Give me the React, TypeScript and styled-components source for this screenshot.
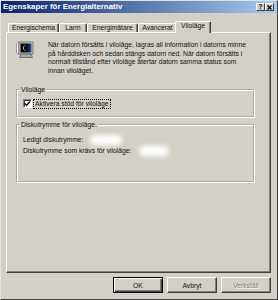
import React from 'react';
import styled, { createGlobalStyle, css } from 'styled-components';

const FACE = '#d4d0c8';

const GlobalStyle = createGlobalStyle`
  html, body { margin: 0; padding: 0; background: ${FACE}; }
  #root { width: 278px; height: 300px; }
  * { box-sizing: border-box; }
`;

const Window = styled.div`
  width: 278px;
  height: 300px;
  display: flex;
  flex-direction: column;
  background: ${FACE};
  border: 1px solid;
  border-color: #e4e2dc #404040 #404040 #e4e2dc;
  font-family: "Liberation Sans", Arial, sans-serif;
  font-size: 6.75px;
  color: #111;
`;

const TitleBar = styled.div`
  height: 12px;
  flex: none;
  display: flex;
  align-items: center;
  padding: 0 3px 0 2px;
  background: linear-gradient(to right, #0a246a, #a6caf0);
`;

const Title = styled.span`
  flex: 1;
  color: #fff;
  font-weight: bold;
  font-size: 7.9px;
  line-height: 12px;
  white-space: nowrap;
`;

const CaptionButtons = styled.div`
  display: flex;
`;

const CaptionButton = styled.div`
  width: 9px;
  height: 8px;
  background: ${FACE};
  border: 1px solid;
  border-color: #fff #404040 #404040 #fff;
  display: flex;
  align-items: center;
  justify-content: center;
  font-weight: bold;
  font-size: 6.5px;
  line-height: 1;
  color: #000;
`;

const Body = styled.div`
  flex: 1;
  display: flex;
  flex-direction: column;
  padding: 8px 6px 6px 5px;
  min-height: 0;
`;

const TabStrip = styled.div`
  height: 11px;
  flex: none;
  display: flex;
  align-items: flex-end;
  padding-left: 2px;
`;

const Tab = styled.div<{ $w: number; $active?: boolean }>`
  position: relative;
  z-index: ${p => (p.$active ? 2 : 1)};
  width: ${p => p.$w + (p.$active ? 4 : 0)}px;
  height: ${p => (p.$active ? 12 : 9)}px;
  margin: ${p => (p.$active ? '0 -2px -1px -2px' : '0')};
  background: ${FACE};
  border-top: 1px solid #fff;
  border-left: 1px solid #fff;
  border-right: 1px solid #404040;
  border-radius: 2px 2px 0 0;
  box-shadow: inset -1px 0 #808080;
  text-align: center;
  white-space: nowrap;
  line-height: 8px;
`;

const Panel = styled.div`
  flex: 1;
  display: flex;
  flex-direction: column;
  border: 1px solid;
  border-color: #fff #404040 #404040 #fff;
  box-shadow: inset -1px -1px #808080;
  padding: 8px 15px 0 9px;
`;

const Intro = styled.div`
  display: flex;
`;

const IconCell = styled.div`
  width: 32px;
  flex: none;
`;

const IntroText = styled.p`
  margin: 0;
  line-height: 8.5px;
  white-space: nowrap;
`;

const GroupBox = styled.fieldset<{ $gap: number; $pt: number; $pb: number }>`
  margin: ${p => p.$gap}px 0 0 0;
  padding: ${p => p.$pt}px 6px ${p => p.$pb}px 5px;
  border: 2px groove #fff;
  min-width: 0;
`;

const Legend = styled.legend`
  padding: 0 1px;
  margin-left: -3px;
  line-height: 8px;
`;

const CheckRow = styled.div`
  display: flex;
  align-items: center;
  height: 9px;
`;

const CheckBox = styled.span`
  width: 9px;
  height: 9px;
  flex: none;
  background: #fff;
  border: 1px solid;
  border-color: #808080 #fff #fff #808080;
  box-shadow: inset 1px 1px #404040;
  display: flex;
  align-items: center;
  justify-content: center;
`;

const CheckLabel = styled.span`
  margin-left: 2px;
  padding: 0 1px;
  outline: 1px dotted #000;
  outline-offset: 0;
  line-height: 8px;
`;

const InfoRow = styled.div`
  display: flex;
  align-items: center;
  height: 11px;
  white-space: nowrap;
`;

const Redacted = styled.span<{ $w: number; $ml: number }>`
  display: inline-block;
  width: ${p => p.$w}px;
  height: 10px;
  margin-left: ${p => p.$ml}px;
  background: #fff;
  border-radius: 5px;
  filter: blur(2.5px);
`;

const ButtonRow = styled.div`
  flex: none;
  display: flex;
  justify-content: flex-end;
  gap: 4px;
  margin-top: 4px;
`;

const Button = styled.button<{ $default?: boolean }>`
  width: 50px;
  height: 16px;
  padding: 0;
  background: ${FACE};
  font-family: inherit;
  font-size: 6.75px;
  color: #111;
  border: 1px solid;
  border-color: #fff #404040 #404040 #fff;
  box-shadow: inset -1px -1px #808080;
  ${p =>
    p.$default &&
    css`
      border-color: #000;
      box-shadow: inset 1px 1px #fff, inset -1px -1px #404040, inset -2px -2px #808080;
    `}
  &:disabled {
    color: #808080;
    text-shadow: 1px 1px #fff;
  }
`;

const MonitorIcon = () => (
  <svg width="18" height="17" viewBox="0 0 18 17">
    <defs>
      <linearGradient id="scr" x1="0" y1="0" x2="1" y2="0">
        <stop offset="0" stopColor="#000000" />
        <stop offset="0.7" stopColor="#0c1430" />
        <stop offset="1" stopColor="#3a5aa8" />
      </linearGradient>
    </defs>
    <polygon points="0.5,2.5 3,1 3,13 0.5,12" fill="#f4f4f4" stroke="#707070" strokeWidth="0.6" />
    <rect x="3" y="1" width="14" height="12" fill="#c8c8c8" stroke="#404040" strokeWidth="0.6" />
    <rect x="4.5" y="2.5" width="11" height="9" fill="url(#scr)" />
    <path d="M10.6 4.3 a2.8 2.8 0 1 0 0 5.4 a2.2 2.2 0 1 1 0 -5.4z" fill="#f2e23a" />
    <polygon points="5,13 15,13 16.5,16.5 3.5,16.5" fill="#a8a8a8" stroke="#404040" strokeWidth="0.6" />
  </svg>
);

const CheckMark = () => (
  <svg width="7" height="7" viewBox="0 0 7 7">
    <path d="M0.8 3.4 L2.7 5.3 L6.2 1.4" fill="none" stroke="#000" strokeWidth="1.4" />
  </svg>
);

const CloseGlyph = () => (
  <svg width="5" height="5" viewBox="0 0 5 5">
    <path d="M0.5 0.5 L4.5 4.5 M4.5 0.5 L0.5 4.5" stroke="#000" strokeWidth="1.2" />
  </svg>
);

const tabs = [
  { label: 'Energischema', w: 51 },
  { label: 'Larm', w: 28 },
  { label: 'Energimätare', w: 51 },
  { label: 'Avancerat', w: 39 },
  { label: 'Viloläge', w: 32, active: true },
];

export default function App() {
  return (
    <>
      <GlobalStyle />
      <Window>
        <TitleBar>
          <Title>Egenskaper för Energialternativ</Title>
          <CaptionButtons>
            <CaptionButton>?</CaptionButton>
            <CaptionButton>
              <CloseGlyph />
            </CaptionButton>
          </CaptionButtons>
        </TitleBar>
        <Body>
          <TabStrip>
            {tabs.map(t => (
              <Tab key={t.label} $w={t.w} $active={t.active}>
                {t.label}
              </Tab>
            ))}
          </TabStrip>
          <Panel>
            <Intro>
              <IconCell>
                <MonitorIcon />
              </IconCell>
              <IntroText>
                När datorn försätts i viloläge, lagras all information i datorns minne
                <br />
                på hårddisken och sedan stängs datorn ned. När datorn försätts i
                <br />
                normalt tillstånd efter viloläge återtar datorn samma status som
                <br />
                innan viloläget.
              </IntroText>
            </Intro>
            <GroupBox $gap={11} $pt={5} $pb={8}>
              <Legend>Viloläge</Legend>
              <CheckRow>
                <CheckBox>
                  <CheckMark />
                </CheckBox>
                <CheckLabel>Aktivera stöd för viloläge</CheckLabel>
              </CheckRow>
            </GroupBox>
            <GroupBox $gap={3} $pt={5} $pb={25}>
              <Legend>Diskutrymme för viloläge.</Legend>
              <InfoRow>
                Ledigt diskutrymme:
                <Redacted $w={32} $ml={7} />
              </InfoRow>
              <InfoRow>
                Diskutrymme som krävs för viloläge:
                <Redacted $w={30} $ml={8} />
              </InfoRow>
            </GroupBox>
          </Panel>
          <ButtonRow>
            <Button $default>OK</Button>
            <Button>Avbryt</Button>
            <Button disabled>Verkställ</Button>
          </ButtonRow>
        </Body>
      </Window>
    </>
  );
}
